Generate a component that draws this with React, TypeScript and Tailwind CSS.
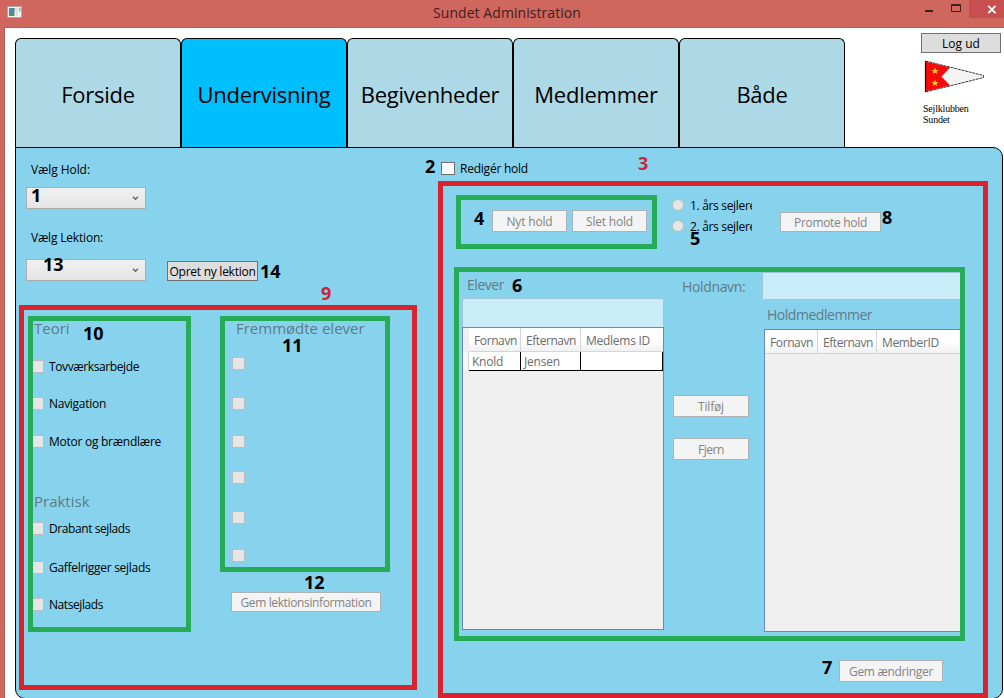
import type { ReactNode } from 'react';

const tabs = ['Forside', 'Undervisning', 'Begivenheder', 'Medlemmer', 'Både'];

function Button({ children, className, enabled = false }: { children: ReactNode; className: string; enabled?: boolean }) {
  const tone = enabled ? 'border-[#707070] bg-[#dddddd] text-black' : 'border-[#adb2b5] bg-[#f4f4f4] text-[#838383]';
  return (
    <button className={`flex shrink-0 items-center justify-center border pt-0.5 whitespace-nowrap ${tone} ${className}`}>
      {children}
    </button>
  );
}

function Combo({ className = '' }: { className?: string }) {
  return (
    <div className={`ml-2.5 flex h-[22px] w-[120px] shrink-0 items-center justify-end border border-[#acacac] bg-linear-to-b from-[#f0f0f0] to-[#e5e5e5] pr-[6px] ${className}`}>
      <svg width="7" height="5" viewBox="0 0 7 5" fill="none" stroke="#606060" strokeWidth="1.3">
        <path d="M1 .8 3.5 3.3 6 .8" />
      </svg>
    </div>
  );
}

function Check({ label, className = '', text = '' }: { label?: string; className?: string; text?: string }) {
  return (
    <label className={`flex h-[13px] items-center gap-[5px] whitespace-nowrap ${className}`}>
      <span className="size-[13px] shrink-0 border border-[#bcbcbc] bg-[#e6e6e6]" />
      {label && <span className={text}>{label}</span>}
    </label>
  );
}

function Heading({ children, className }: { children: ReactNode; className: string }) {
  return <div className={`flex h-5 items-center whitespace-nowrap text-[#5f7b86] ${className}`}>{children}</div>;
}

function Mark({ n, className }: { n: number; className: string }) {
  return <span className={`absolute text-[18px] leading-[18px] font-bold ${className}`}>{n}</span>;
}

function HeadCell({ children, className }: { children?: ReactNode; className: string }) {
  return (
    <div className={`flex shrink-0 items-center border-b border-[#d5d5d5] bg-linear-to-b from-white via-white to-[#f0f1f3] pt-0.5 ${className}`}>
      {children}
    </div>
  );
}

function TitleBar() {
  return (
    <header className="flex h-[27px] shrink-0 justify-between">
      <svg className="mt-[6px] ml-[7px]" width="15" height="12" viewBox="0 0 15 12">
        <rect x=".5" y=".5" width="14" height="11" fill="#f4f4f4" stroke="#b9a3a0" />
        <rect x="2" y="2" width="5.5" height="8" fill="#4f8f86" />
        <rect x="2" y="2" width="5.5" height="3" fill="#5c86a0" />
        <rect x="8.5" y="2" width="2.5" height="8" fill="#dedede" />
        <rect x="12" y="2" width="1.500" height="3.500" fill="#8fb3a4" />
      </svg>
      <h1 className="ml-[67px] text-[14px] leading-[26px] tracking-[0.06px] text-[#40201e]">Sundet Administration</h1>
      <div className="flex h-[18px]">
        <svg width="44" height="18" viewBox="0 0 44 18">
          <rect x="0" y="10" width="8" height="2" fill="#40201e" />
          <path d="M26.5 4.5h9v7h-9zM26 5.5h10" fill="none" stroke="#40201e" />
        </svg>
        <div className="flex w-[35px] items-center bg-[#c84f50] pl-[18px]">
          <svg width="10" height="9" viewBox="0 0 10 9" fill="none" stroke="white" strokeWidth="1.8">
            <path d="m1.3 .8 7.2 7.4M8.5 .8 1.3 8.2" />
          </svg>
        </div>
      </div>
    </header>
  );
}

function Brand() {
  return (
    <div className="mt-[5px] mr-[3px] flex w-20 flex-col">
      <Button enabled className="h-5 w-20">Log ud</Button>
      <svg className="mt-[7px] ml-[3px]" width="62" height="34" viewBox="0 0 62 34">
        <path d="M1.5 1.5 59.5 16.5 1.5 31.5z" fill="#f4f4f4" />
        <path d="M1.5 1.5 26 7.5 17.5 16.5 26 25.5 1.5 31.5z" fill="#f80808" />
        <path d="M1.5 1 59.5 15.5v2L1.5 32z" fill="none" stroke="#222" strokeWidth=".9" strokeDasharray="3 .7" />
        <path d="M1.5 1v31" stroke="#200" strokeWidth="1.2" />
        <path d="m11 7.5 1 2.4 2.5.1-2 1.6.7 2.4-2.2-1.4L8.8 14l.7-2.4-2-1.6 2.5-.1zM11 19.5l1 2.4 2.5.1-2 1.6.7 2.4-2.2-1.4L8.8 26l.7-2.4-2-1.6 2.5-.1z" fill="#ffd21f" />
      </svg>
      <div className="mt-[9px] ml-[2px] font-['Liberation_Serif',serif] text-[10px] leading-[11px] tracking-[-0.2px] text-black">
        Sejlklubben
        <br />
        Sundet
      </div>
    </div>
  );
}

function Lessons() {
  return (
    <section className="flex w-[422px] shrink-0 flex-col pt-3">
      <div className="ml-[15px] h-5 leading-5 tracking-[-0.08px]">Vælg Hold:</div>
      <Combo className="mt-[7px]" />
      <div className="mt-[19px] ml-[15px] h-5 leading-5 tracking-[-0.19px]">Vælg Lektion:</div>
      <div className="mt-[11px] flex items-end">
        <Combo />
        <Button enabled className="ml-[21px] h-5 w-[91px] tracking-[-0.26px]">Opret ny lektion</Button>
      </div>
      <div className="flex pt-[37px]">
        <div className="w-[216px] pl-[15px]">
          <Heading className="ml-[3px] text-[15px]">Teori</Heading>
          <Check className="mt-[22px]" label="Tovværksarbejde" text="tracking-[-0.39px]" />
          <Check className="mt-6" label="Navigation" text="tracking-[-0.28px]" />
          <Check className="mt-[25px]" label="Motor og brændlære" text="tracking-[-0.26px]" />
          <Heading className="mt-[43px] ml-[3px] text-[15px]">Praktisk</Heading>
          <Check className="mt-[11px]" label="Drabant sejlads" text="tracking-[-0.42px]" />
          <Check className="mt-[26px]" label="Gaffelrigger sejlads" text="tracking-[-0.29px]" />
          <Check className="mt-6" label="Natsejlads" text="tracking-[-0.42px]" />
        </div>
        <div>
          <Heading className="ml-1 text-[15px]">Fremmødte elever</Heading>
          <Check className="mt-[19px]" />
          <Check className="mt-[27px]" />
          <Check className="mt-[25px]" />
          <Check className="mt-[23px]" />
          <Check className="mt-[27px]" />
          <Check className="mt-[25px]" />
          <Button className="mt-[30px] -ml-px h-5 w-[150px] tracking-[-0.37px]">Gem lektionsinformation</Button>
        </div>
      </div>
    </section>
  );
}

function Students() {
  return (
    <div className="w-[202px]">
      <Heading className="mt-[2px] ml-[5px] text-[14px] tracking-[-0.46px]">Elever</Heading>
      <div className="mt-1 h-[29px] border border-b-0 border-[#9fc6d6] bg-[#c9ecf8]" />
      <div className="h-[303px] border border-[#688caf] bg-[#efefef] text-[#6b6b6b]">
        <div className="flex h-6">
          <div className="w-[6px] bg-[#efefef]" />
          <HeadCell className="w-[52px] border-r pl-[5px] tracking-[-0.39px]">Fornavn</HeadCell>
          <HeadCell className="w-[60px] border-r pl-[5px] tracking-[-0.45px]">Efternavn</HeadCell>
          <HeadCell className="w-[82px] pl-[5px] tracking-[-0.27px]">Medlems ID</HeadCell>
        </div>
        <div className="flex h-[19px] leading-5">
          <div className="w-[6px] border-r border-[#d5d5d5] bg-[#f7f7f7]" />
          <div className="w-[52px] border-r border-b border-black bg-white pl-[3px] tracking-[-0.26px]">Knold</div>
          <div className="w-[60px] border-r border-b border-black bg-white pl-[3px] tracking-[-0.19px]">Jensen</div>
          <div className="w-[82px] border-r border-b border-black bg-white" />
        </div>
      </div>
    </div>
  );
}

function Members() {
  return (
    <div className="ml-[13px] w-[200px]">
      <div className="h-7 border border-[#9fc6d6] bg-[#c9ecf8]" />
      <Heading className="mt-[4px] ml-[5px] text-[14px] tracking-[-0.47px]">Holdmedlemmer</Heading>
      <div className="mt-[5px] ml-[2px] h-[303px] border border-[#688caf] bg-[#efefef] text-[#6b6b6b]">
        <div className="flex h-6">
          <HeadCell className="w-[53px] border-r pl-[5px] tracking-[-0.39px]">Fornavn</HeadCell>
          <HeadCell className="w-[59px] border-r pl-[5px] tracking-[-0.45px]">Efternavn</HeadCell>
          <HeadCell className="w-[84px] pl-[5px] tracking-[-0.34px]">MemberID</HeadCell>
        </div>
      </div>
    </div>
  );
}

function Radio({ label }: { label: string }) {
  return (
    <label className="flex h-3 items-center gap-[6px] whitespace-nowrap">
      <span className="size-3 shrink-0 rounded-full border border-[#bcbcbc] bg-[#e6e6e6]" />
      <span className="pt-px tracking-[-0.32px]">{label}</span>
    </label>
  );
}

function TeamEditor() {
  return (
    <section className="flex flex-1 flex-col pt-[14px]">
      <label className="ml-[3px] flex h-[13px] items-center gap-[5px]">
        <span className="h-[13px] w-[14px] border border-[#707070] bg-white" />
        <span className="tracking-[-0.23px]">Redigér hold</span>
      </label>
      <div className="mt-6 flex h-[73px] items-start pl-[54px]">
        <Button className="mt-[11px] h-[22px] w-[75px] tracking-[-0.17px]">Nyt hold</Button>
        <Button className="mt-[11px] ml-[5px] h-[22px] w-[75px] tracking-[-0.19px]">Slet hold</Button>
        <div className="ml-[25px] flex h-9 w-20 shrink-0 flex-col gap-[9px] overflow-hidden">
          <Radio label="1. års sejlere" />
          <Radio label="2. års sejlere" />
        </div>
        <Button className="mt-[13px] ml-[28px] h-5 w-[101px] tracking-[-0.31px]">Promote hold</Button>
      </div>
      <div className="flex pl-6">
        <Students />
        <div className="ml-[9px] flex w-[76px] flex-col">
          <Heading className="mt-1 ml-[9px] text-[14px] tracking-[-0.35px]">Holdnavn:</Heading>
          <Button className="mt-[99px] h-[22px] w-[76px] tracking-[-0.16px]">Tilføj</Button>
          <Button className="mt-[21px] h-[22px] w-[76px] tracking-[-0.45px]">Fjern</Button>
        </div>
        <Members />
      </div>
      <Button className="mt-7 ml-[401px] h-[22px] w-[104px] tracking-[-0.32px]">Gem ændringer</Button>
    </section>
  );
}

function Annotations() {
  return (
    <div className="pointer-events-none absolute inset-0">
      <div className="absolute top-[305px] left-[19px] h-[385px] w-[398px] border-5 border-[#d9242f]" />
      <div className="absolute top-[181px] left-[438px] h-[517px] w-[550px] border-5 border-[#d9242f]" />
      <div className="absolute top-[316px] left-[28px] h-[316px] w-[163px] border-5 border-[#26ac57]" />
      <div className="absolute top-[316px] left-[220px] h-[256px] w-[170px] border-5 border-[#26ac57]" />
      <div className="absolute top-[195px] left-[456px] h-[54px] w-[201px] border-5 border-[#26ac57]" />
      <div className="absolute top-[267px] left-[454px] h-[374px] w-[511px] border-5 border-[#26ac57]" />
      <Mark n={1} className="top-[186px] left-[31px]" />
      <Mark n={2} className="top-[157px] left-[425px]" />
      <Mark n={3} className="top-[154px] left-[638px] text-[#cb2536]" />
      <Mark n={4} className="top-[209px] left-[474px]" />
      <Mark n={5} className="top-[229px] left-[690px]" />
      <Mark n={6} className="top-[276px] left-[512px]" />
      <Mark n={7} className="top-[658px] left-[822px]" />
      <Mark n={8} className="top-[208px] left-[882px]" />
      <Mark n={9} className="top-[284px] left-[321px] text-[#cb2536]" />
      <Mark n={10} className="top-[324px] left-[83px]" />
      <Mark n={11} className="top-[336px] left-[282px]" />
      <Mark n={12} className="top-[573px] left-[304px]" />
      <Mark n={13} className="top-[255px] left-[43px]" />
      <Mark n={14} className="top-[262px] left-[260px]" />
    </div>
  );
}

export default function App() {
  return (
    <div className="relative flex h-[698px] w-[1004px] flex-col overflow-hidden bg-[#cf675f] font-['Open_Sans','Noto_Sans',sans-serif] text-[12px] text-black">
      <TitleBar />
      <main className="ml-1 flex min-h-0 flex-1 flex-col border-t border-l border-[#a6625d] bg-white pl-2.5">
        <div className="flex h-[119px] shrink-0 justify-between">
          <nav className="mt-[10px] flex">
            {tabs.map((tab) => (
              <button
                key={tab}
                className={`flex w-[166px] items-center justify-center rounded-t-[6px] border border-b-0 border-black pt-0.5 text-[22px] tracking-[-0.25px] ${tab === 'Undervisning' ? 'bg-[#00bfff]' : 'bg-[#add8e6]'}`}
              >
                {tab}
              </button>
            ))}
          </nav>
          <Brand />
        </div>
        <div className="flex h-[552px] w-[988px] shrink-0 rounded-[10px] rounded-tl-none border border-black bg-[#87d3ed]">
          <Lessons />
          <TeamEditor />
        </div>
      </main>
      <Annotations />
    </div>
  );
}
